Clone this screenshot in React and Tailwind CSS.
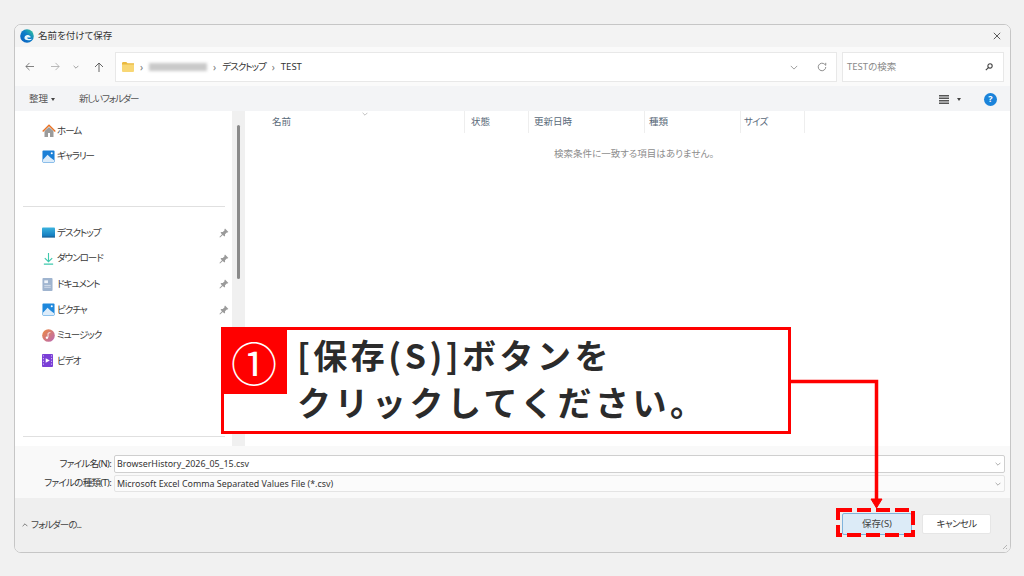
import React from 'react';

const jp = { fontFamily: '"Noto Sans", "Noto Sans CJK JP", sans-serif' };

const Chevron = ({ className = '', up }) => (
    <svg viewBox="0 0 10 6" className={className} fill="none" stroke="currentColor" strokeWidth="1">
        <path d={up ? 'M1 5l4-4 4 4' : 'M1 1l4 4 4-4'} />
    </svg>
);

const Caret = () => <span className="block w-0 h-0 border-x-[2px] border-x-transparent border-t-[3px] border-t-[#444]" />;

const Pin = () => (
    <svg viewBox="0 0 10 10" className="w-[10px] h-[10px] ml-auto mr-[1px]" fill="#9a9a9a">
        <path d="M6 .6l3.4 3.4-1 .6-.6-.2L6 6.200l.1 1.500-.8.8L3.800 7 1 9.600.4 9 3 6.200 1.500 4.700l.8-.8 1.500.1 1.800-1.800-.2-.6z" />
    </svg>
);

const Home = () => (
    <svg viewBox="0 0 14 14" className="w-[14px] h-[14px]">
        <path d="M2.500 7v6h3.500V9h2v4h3.500V7L7 3z" fill="#9b9b9b" />
        <path d="M.7 7.500L7 1.300l6.300 6.200" fill="none" stroke="#e8752a" strokeWidth="1.500" />
    </svg>
);

const Picture = ({ soft }) => (
    <svg viewBox="0 0 14 14" className="w-[13px] h-[13px]">
        <rect x="0.500" y="0.500" width="13" height="13" rx="1" fill={soft ? '#1e88dc' : '#1b7fd6'} />
        <path d="M1 13v-2.500L6 5l3 3 4 3v2z" fill="#dcecfa" />
        <circle cx="10.500" cy="3.500" r="1.100" fill="#fff" />
    </svg>
);

const Desktop = () => (
    <svg viewBox="0 0 14 11" className="w-[13px] h-[11px]">
        <defs>
            <linearGradient id="desk" x1="0" y1="0" x2="0" y2="1">
                <stop offset="0" stopColor="#3cb4df" />
                <stop offset="1" stopColor="#1178bd" />
            </linearGradient>
        </defs>
        <rect width="14" height="10" rx="1" fill="url(#desk)" />
        <rect y="9.500" width="14" height="1.500" fill="#0e5f99" />
    </svg>
);

const Download = () => (
    <svg viewBox="0 0 14 14" className="w-[13px] h-[13px]" fill="none" stroke="#3fc9ad" strokeWidth="1.200">
        <path d="M7 1v9M3 6.500L7 10.500l4-4M2 13h10" />
    </svg>
);

const Doc = () => (
    <svg viewBox="0 0 12 14" className="w-[11px] h-[13px]">
        <rect width="11" height="14" x="0.500" rx="1" fill="#9fb4cf" />
        <rect x="2.500" y="2.500" width="4" height="3" fill="#eef3f9" />
        <path d="M2.500 8h7M2.500 10h7" stroke="#e4ebf3" strokeWidth="0.800" />
    </svg>
);

const Music = () => (
    <svg viewBox="0 0 14 14" className="w-[13px] h-[13px]">
        <defs>
            <linearGradient id="mus" x1="0" y1="0" x2="1" y2="1">
                <stop offset="0" stopColor="#ee8b3f" />
                <stop offset="1" stopColor="#b968b6" />
            </linearGradient>
        </defs>
        <circle cx="7" cy="7" r="6.800" fill="url(#mus)" />
        <path d="M6.500 9V4.500l2.500-.7" fill="none" stroke="#fff" strokeWidth="0.900" />
        <circle cx="5.300" cy="9.300" r="1.300" fill="#fff" />
    </svg>
);

const Video = () => (
    <svg viewBox="0 0 12 14" className="w-[11px] h-[13px]">
        <rect width="12" height="14" rx="1" fill="#7a3fd6" />
        <path d="M4 4.500l4.500 2.500L4 9.500z" fill="#fff" />
        <path d="M1 2h1M1 5h1M1 8h1M1 11h1M10 2h1M10 5h1M10 8h1M10 11h1" stroke="#d9c6f7" strokeWidth="1.200" />
    </svg>
);

const Edge = () => (
    <svg viewBox="0 0 14 14" className="w-[14px] h-[14px]">
        <defs>
            <linearGradient id="edge" x1="0" y1="1" x2="1" y2="0">
                <stop offset="0" stopColor="#0a5cc0" />
                <stop offset="0.550" stopColor="#0f7fc8" />
                <stop offset="1" stopColor="#3ad08f" />
            </linearGradient>
        </defs>
        <circle cx="7" cy="7" r="6.800" fill="url(#edge)" />
        <path d="M4.500 9.500C4 7 6.500 5.500 8.800 6.200c1.400.4 2 1.400 1.800 2.300H7.200c.1 1.500 2.300 2.100 4.800 1.200-.8 1.100-2.300 1.800-3.800 1.600-1.900-.2-3.300-.5-3.700-1.800z" fill="#e8f6fb" />
    </svg>
);

const places = [
    { label: 'デスクトップ', icon: <Desktop />, pin: true },
    { label: 'ダウンロード', icon: <Download />, pin: true },
    { label: 'ドキュメント', icon: <Doc />, pin: true },
    { label: 'ピクチャ', icon: <Picture soft />, pin: true },
    { label: 'ミュージック', icon: <Music /> },
    { label: 'ビデオ', icon: <Video /> },
];

const SideRow = ({ icon, label, pin }) => (
    <div className="h-[25.6px] flex items-center pl-[27px] pr-[2px]">
        <span className="w-[15px] flex items-center">{icon}</span>
        <span className="text-[9.5px] tracking-[-1px] text-[#3a3a3a]">{label}</span>
        {pin && <Pin />}
    </div>
);

const columns = [
    { label: '名前', w: 'w-[220px]', pl: 'pl-[27px]' },
    { label: '状態', w: 'w-[64px]', pl: 'pl-[6px]' },
    { label: '更新日時', w: 'w-[116px]', pl: 'pl-[5px]' },
    { label: '種類', w: 'w-[96px]', pl: 'pl-[4px]' },
    { label: 'サイズ', w: 'w-[64px]', pl: 'pl-[3px] tracking-[-0.8px]' },
];

const Field = ({ label, value, light }) => (
    <div className="flex items-center">
        <span className="w-[99px] text-right text-[9.5px] tracking-[-0.7px] text-[#333] pr-[3px]">{label}</span>
        <div className={`w-[891px] flex items-center justify-between pl-[2px] pr-[3px] border rounded-[2px] text-[8.9px] text-[#333] ${light ? 'h-[17px] bg-[#fbfbfb] border-[#e4e4e4]' : 'h-[18px] bg-white border-[#cfcfcf]'}`}>
            <span className="whitespace-nowrap">{value}</span>
            <Chevron className="w-[6px] h-[4px] text-[#777]" />
        </div>
    </div>
);

export default function App() {
    return (
        <div className="relative w-[1024px] h-[576px] overflow-hidden bg-[#f1f1f1] pt-[24px] pl-[14px] [font-feature-settings:'palt']" style={jp}>
            <div className="w-[997px] h-[529px] flex flex-col border border-[#c6c6c6] rounded-[7px] overflow-hidden bg-white">
                {/* title bar */}
                <div className="h-[22px] shrink-0 bg-[#f3f3f3] flex items-center pl-[5px] pr-[9px]">
                    <Edge />
                    <span className="ml-[4px] text-[9.5px] text-[#333]">名前を付けて保存</span>
                    <svg viewBox="0 0 10 10" className="ml-auto w-[8px] h-[8px]" fill="none" stroke="#333" strokeWidth="1">
                        <path d="M1 1l8 8M9 1l-8 8" />
                    </svg>
                </div>

                {/* nav row */}
                <div className="h-[39px] shrink-0 bg-[#fafafa] flex items-center pl-[10px] pr-[5px]">
                    <svg viewBox="0 0 10 10" className="w-[9px] h-[9px]" fill="none" stroke="#666" strokeWidth="0.900">
                        <path d="M10 5H1M5 1L1 5l4 4" />
                    </svg>
                    <svg viewBox="0 0 10 10" className="w-[9px] h-[9px] ml-[17px]" fill="none" stroke="#aaa" strokeWidth="0.900">
                        <path d="M0 5h9M5 1l4 4-4 4" />
                    </svg>
                    <Chevron className="w-[6px] h-[4px] ml-[13px] text-[#666]" />
                    <svg viewBox="0 0 10 10" className="w-[10px] h-[10px] ml-[15px]" fill="none" stroke="#555" strokeWidth="0.900">
                        <path d="M5 10V1M1 5l4-4 4 4" />
                    </svg>
                    <div className="ml-[11px] w-[722px] h-[30px] bg-white border border-[#e8e8e8] flex items-center pl-[6px] pr-[9px] pt-[1px] text-[9.5px] text-[#333]">
                        <svg viewBox="0 0 12 10" className="w-[12px] h-[10px]">
                            <path d="M0 1.500C0 .700.500 0 1.300 0h3l1.200 1.200H12V3H0z" fill="#eab93e" />
                            <path d="M0 2.500h12V9a1 1 0 01-1 1H1a1 1 0 01-1-1z" fill="#f8d775" />
                        </svg>
                        <span className="ml-[6px] text-[#777] text-[10px]">›</span>
                        <span className="ml-[6px] w-[58px] h-[8px] bg-[#c9c9c9] blur-[1.500px]" />
                        <span className="ml-[6px] text-[#777] text-[10px]">›</span>
                        <span className="ml-[6px] tracking-[-1px]">デスクトップ</span>
                        <span className="ml-[6px] text-[#777] text-[10px]">›</span>
                        <span className="ml-[6px]">TEST</span>
                        <Chevron className="ml-auto w-[8px] h-[5px] text-[#888]" />
                        <svg viewBox="0 0 12 12" className="ml-[19px] w-[10px] h-[10px]" fill="none" stroke="#777" strokeWidth="1">
                            <path d="M10.500 6a4.500 4.500 0 11-1.300-3.200L10.500 4V1" />
                        </svg>
                    </div>
                    <div className="ml-[5px] w-[162px] h-[30px] bg-white border border-[#e8e8e8] flex items-center pl-[4px] pr-[10px] pt-[1px] text-[9.5px] text-[#8a8a8a]">
                        <span>TESTの検索</span>
                        <svg viewBox="0 0 10 10" className="ml-auto w-[8px] h-[8px]" fill="none" stroke="#444" strokeWidth="1.400">
                            <circle cx="6.300" cy="3.700" r="2.700" />
                            <path d="M4.300 5.700L1 9" />
                        </svg>
                    </div>
                </div>

                {/* command bar */}
                <div className="h-[25px] shrink-0 bg-[#f3f4f6] flex items-center pl-[14px] pr-[13px] pt-[1px] text-[9.5px] text-[#555]">
                    <span>整理</span>
                    <span className="ml-[3px]"><Caret /></span>
                    <span className="ml-[24px] tracking-[-1.200px]">新しいフォルダー</span>
                    <svg viewBox="0 0 10 9" className="ml-auto w-[10px] h-[9px]" fill="#555">
                        <path d="M0 0h10v1.400H0zM0 2.500h10v1.400H0zM0 5h10v1.400H0zM0 7.500h10v1.400H0z" />
                    </svg>
                    <span className="ml-[8px] mr-[23px]"><Caret /></span>
                    <span className="w-[13px] h-[13px] rounded-full bg-[#1a83da] text-white text-[9px] font-bold flex items-center justify-center">?</span>
                </div>

                {/* body */}
                <div className="h-[335px] shrink-0 flex bg-white">
                    <div className="w-[217px] shrink-0 pt-[7px]">
                        <SideRow icon={<Home />} label="ホーム" />
                        <SideRow icon={<Picture />} label="ギャラリー" />
                        <div className="mt-[37px] ml-[8px] w-[202px] h-[1px] bg-[#e0e0e0]" />
                        <div className="mt-[13px]">
                            {places.map((p) => <SideRow key={p.label} {...p} />)}
                        </div>
                        <div className="mt-[62px] ml-[8px] w-[202px] h-[1px] bg-[#e0e0e0]" />
                    </div>
                    <div className="w-[13px] shrink-0 bg-[#f0f0f0] pt-[14px] pl-[5px]">
                        <div className="w-[3px] h-[154px] rounded-full bg-[#8a8a8a]" />
                    </div>
                    <div className="flex-1">
                        <div className="relative h-[22px] flex text-[9.5px] text-[#5a6a7a]">
                            {columns.map((c) => (
                                <div key={c.label} className={`${c.w} ${c.pl} flex items-center border-r border-[#eeeeee]`}>{c.label}</div>
                            ))}
                            <Chevron className="absolute left-[117px] top-[1px] w-[6px] h-[4px] text-[#999]" />
                        </div>
                        <p className="mt-[14px] pl-[309px] text-[9.5px] text-[#8d8d8d]">検索条件に一致する項目はありません。</p>
                    </div>
                </div>

                {/* file fields */}
                <div className="h-[52px] shrink-0 bg-[#f9f9f9] pt-[9px] flex flex-col gap-[2px]">
                    <Field label="ファイル名(N):" value="BrowserHistory_2026_05_15.csv" />
                    <Field label="ファイルの種類(T):" value="Microsoft Excel Comma Separated Values File (*.csv)" light />
                </div>

                {/* footer */}
                <div className="flex-1 bg-[#efefef] flex items-center pl-[7px] pr-[19px] pb-[2px]">
                    <Chevron up className="w-[6px] h-[4px] mt-[2px] text-[#333]" />
                    <span className="ml-[3px] mt-[2px] text-[9.5px] tracking-[-1px] text-[#444]">フォルダーの...</span>
                    <button className="ml-auto w-[70px] h-[22px] bg-[#dcebf7] border border-[#7fb3dc] rounded-[2px] text-[9.5px] text-[#444]">保存(S)</button>
                    <button className="ml-[10px] w-[69px] h-[20px] bg-white border border-[#e6e6e6] rounded-[2px] text-[9.5px] tracking-[-0.6px] text-[#333]">キャンセル</button>
                </div>
            </div>

            {/* callout */}
            <div className="absolute left-[221px] top-[327px] w-[570px] h-[107px] bg-white border-[3px] border-[#ff0000] text-[#2b2b2b] [font-feature-settings:normal]" style={{ fontFamily: '"Noto Sans CJK JP", sans-serif' }}>
                <div className="absolute -left-[3px] -top-[3px] w-[66px] h-[67px] bg-[#ff0000] text-white flex items-center justify-center text-[46px] leading-none">①</div>
                <div className="pl-[73px] pt-[1px] text-[34px] leading-[47px] font-bold tracking-[3.500px] whitespace-nowrap">
                    <div>[保存(S)]ボタンを</div>
                    <div>クリックしてください。</div>
                </div>
            </div>

            {/* connector and dashed highlight */}
            <svg className="absolute left-0 top-0 w-[1024px] h-[576px] pointer-events-none" viewBox="0 0 1024 576" fill="none">
                <path d="M790 381.500h86.500V500" stroke="#ff0000" strokeWidth="3.500" />
                <path d="M871 499h11l-5.500 9z" fill="#ff0000" stroke="#ff0000" strokeWidth="1" />
                <rect x="838" y="510" width="75" height="25" stroke="#ff0000" strokeWidth="4" strokeDasharray="14 5" />
                <path d="M1003 549l4-4M1006 549l1-1" stroke="#b5b5b5" strokeWidth="1" />
            </svg>
        </div>
    );
}
